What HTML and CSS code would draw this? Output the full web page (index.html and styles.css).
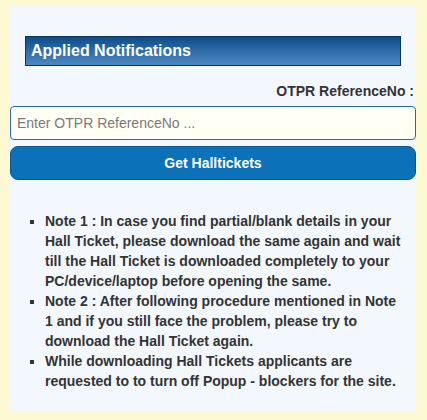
FILE: index.html
```html
<!DOCTYPE html>
<html>
<head>
<meta charset="utf-8">
<link rel="stylesheet" href="styles.css">
</head>
<body>
<div class="panel">
  <div class="header">Applied Notifications</div>
  <div class="label">OTPR ReferenceNo :</div>
  <input class="field" type="text" placeholder="Enter OTPR ReferenceNo ...">
  <button class="btn" type="button">Get Halltickets</button>
  <ul class="notes">
    <li>Note 1 : In case you find partial/blank details in your Hall Ticket, please download the same again and wait till the Hall Ticket is downloaded completely to your PC/device/laptop before opening the same.</li>
    <li>Note 2 : After following procedure mentioned in Note 1 and if you still face the problem, please try to download the Hall Ticket again.</li>
    <li>While downloading Hall Tickets applicants are requested to to turn off Popup - blockers for the site.</li>
  </ul>
</div>
</body>
</html>
```

FILE: styles.css
```css
html, body {
  margin: 0;
  padding: 0;
  background: #fdf9d3;
  font-family: "Liberation Sans", Arial, sans-serif;
}
body {
  padding: 6px 11px 0 10px;
}
.panel {
  background: #f3f8ff;
  padding: 30px 0 20px 0;
  min-height: 400px;
  box-sizing: border-box;
}
.header {
  margin: 0 15px;
  height: 30px;
  box-sizing: border-box;
  border: 1px solid #0b3563;
  background: linear-gradient(to bottom, #0a4d8a 0%, #2f6ca8 50%, #4c88c2 100%);
  color: #fff;
  font-weight: bold;
  font-size: 16px;
  line-height: 28px;
  padding-left: 5px;
}
.label {
  text-align: right;
  font-weight: bold;
  font-size: 14px;
  color: #333;
  margin-top: 16px;
  padding-right: 2px;
  line-height: 18px;
}
.field {
  display: block;
  width: 100%;
  box-sizing: border-box;
  height: 34px;
  margin-top: 6px;
  border: 1px solid #2b6aa6;
  border-radius: 4px;
  background: #fffff5;
  font-family: "Liberation Sans", Arial, sans-serif;
  font-size: 14px;
  padding: 0 6px;
  color: #333;
}
.field::placeholder {
  color: #7a7a7a;
}
.btn {
  display: block;
  width: 100%;
  box-sizing: border-box;
  height: 34px;
  margin-top: 6px;
  border: 1px solid #0b5794;
  border-radius: 8px;
  background: #0b71b9;
  color: #fff;
  font-family: "Liberation Sans", Arial, sans-serif;
  font-weight: bold;
  font-size: 14px;
}
.notes {
  list-style: square;
  margin: 31px 0 0 0;
  padding: 0 15px 0 35px;
  color: #333;
  font-weight: bold;
  font-size: 14px;
  line-height: 20px;
}
```
